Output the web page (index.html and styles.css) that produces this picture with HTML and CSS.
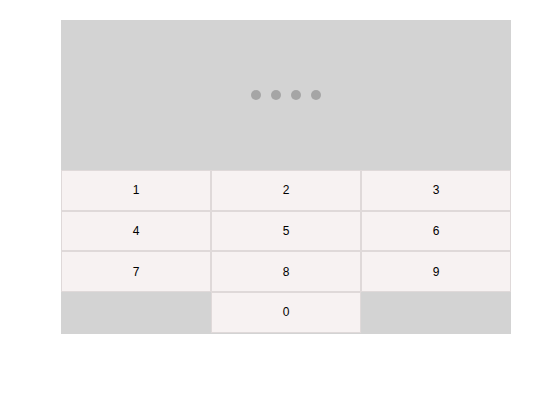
FILE: index.html
```html
<!DOCTYPE html>
<html>
<head>
<meta charset="utf-8">
<link rel="stylesheet" href="styles.css">
</head>
<body>
<div class="pad">
  <div class="display">
    <span class="dot"></span><span class="dot"></span><span class="dot"></span><span class="dot"></span>
  </div>
  <div class="keys">
    <button class="key">1</button>
    <button class="key">2</button>
    <button class="key">3</button>
    <button class="key">4</button>
    <button class="key">5</button>
    <button class="key">6</button>
    <button class="key">7</button>
    <button class="key">8</button>
    <button class="key">9</button>
    <span class="blank"></span>
    <button class="key">0</button>
    <span class="blank"></span>
  </div>
</div>
</body>
</html>
```

FILE: styles.css
```css
html, body {
  margin: 0;
  padding: 0;
  background: #ffffff;
}
body {
  padding: 20px 0 0 61px;
  font-family: "Liberation Sans", Arial, sans-serif;
}
.pad {
  width: 450px;
  height: 314px;
  background: #d3d3d3;
}
.display {
  height: 150px;
  display: flex;
  align-items: center;
  justify-content: center;
  gap: 10px;
}
.dot {
  width: 10px;
  height: 10px;
  border-radius: 50%;
  background: #a5a5a5;
}
.keys {
  display: grid;
  grid-template-columns: repeat(3, 1fr);
  grid-auto-rows: 40.67px;
}
.key {
  margin: 0;
  border: 1px solid #dfd9d9;
  background: #f7f2f2;
  font-family: "Liberation Sans", Arial, sans-serif;
  font-size: 12px;
  color: #000;
  padding: 0;
}
```
